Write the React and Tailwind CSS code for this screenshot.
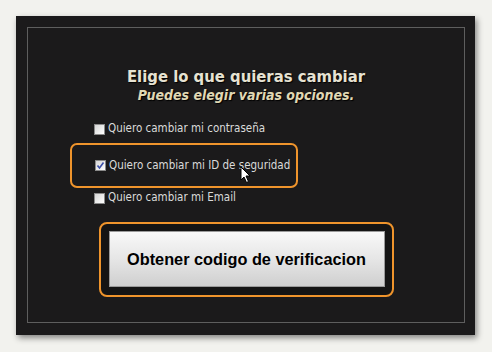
export default function App() {
  const rows = [
    { label: "Quiero cambiar mi contraseña", checked: false },
    { label: "Quiero cambiar mi ID de seguridad", checked: true, hl: true },
    { label: "Quiero cambiar mi Email", checked: false },
  ];

  const Box = ({ checked }) => (
    <span className="relative inline-block w-[11px] h-[11px] shrink-0 border border-[#8a8a8a] bg-gradient-to-br from-[#d6d6d6] to-[#ffffff]">
      {checked && (
        <svg viewBox="0 0 11 11" className="absolute -left-px -top-px w-[11px] h-[11px]">
          <path d="M2.5 5.5 L4.5 8 L8.5 2.5" fill="none" stroke="#3b4fa8" strokeWidth="1.6" />
        </svg>
      )}
    </span>
  );

  const Row = ({ label, checked }) => (
    <div className="flex items-center gap-[3px] text-[11.5px] text-[#dadada] leading-none" style={{ fontFamily: '"DejaVu Sans Condensed", "DejaVu Sans", sans-serif' }}>
      <Box checked={checked} />
      <span>{label}</span>
    </div>
  );

  return (
    <div className="w-[492px] h-[352px] bg-[#f2f2ee] pt-4 pl-4">
      <div className="w-[459px] h-[319px] bg-[#1b1a1b] pt-[11px] pl-[11px] shadow-[2px_3px_6px_rgba(0,0,0,0.45)]">
        <div className="relative w-[438px] h-[296px] border border-[#5e5e5e] flex flex-col items-center">
          <h1
            className="mt-[38px] text-[16.5px] leading-[21px] font-bold text-[#e6e2d2] [text-shadow:1px_1px_1px_#000]"
            style={{ fontFamily: '"DejaVu Sans Condensed", "DejaVu Sans", sans-serif' }}
          >
            Elige lo que quieras cambiar
          </h1>
          <p
            className="text-[14px] leading-[16px] font-bold italic text-[#e0d8b4] [text-shadow:1px_1px_1px_#000]"
            style={{ fontFamily: '"DejaVu Sans Condensed", "DejaVu Sans", sans-serif' }}
          >
            Puedes elegir varias opciones.
          </p>

          <div className="self-start mt-[19px] flex flex-col">
            <div className="pl-[66px] h-[14px] flex items-center">
              <Row {...rows[0]} />
            </div>
            <div className="ml-[42px] mt-[7px] w-[228px] h-[45px] border-2 border-[#ef942c] rounded-[7px] pl-[23px] flex items-center">
              <Row {...rows[1]} />
            </div>
            <div className="pl-[66px] mt-[3px] h-[14px] flex items-center">
              <Row {...rows[2]} />
            </div>
          </div>

          <div className="mt-[17px] w-[295px] h-[75px] border-2 border-[#ef942c] rounded-[8px] bg-[#141414] pl-[8px] pt-[7px]">
            <button
              className="w-[276px] h-[56px] border border-[#9a9a9a] bg-gradient-to-b from-[#f8f8f8] via-[#e6e6e6] to-[#cfcfcf] text-[16.3px] font-bold text-black"
              style={{ fontFamily: '"Liberation Sans", Arial, sans-serif' }}
            >
              Obtener codigo de verificacion
            </button>
          </div>

          <svg viewBox="0 0 12 18" className="absolute left-[212px] top-[138px] w-[12px] h-[18px]">
            <path d="M1 1 L1 14 L4 11 L6.5 16.5 L8.5 15.5 L6 10 L10 10 Z" fill="#fff" stroke="#000" strokeWidth="1" strokeLinejoin="round" />
          </svg>
        </div>
      </div>
    </div>
  );
}
